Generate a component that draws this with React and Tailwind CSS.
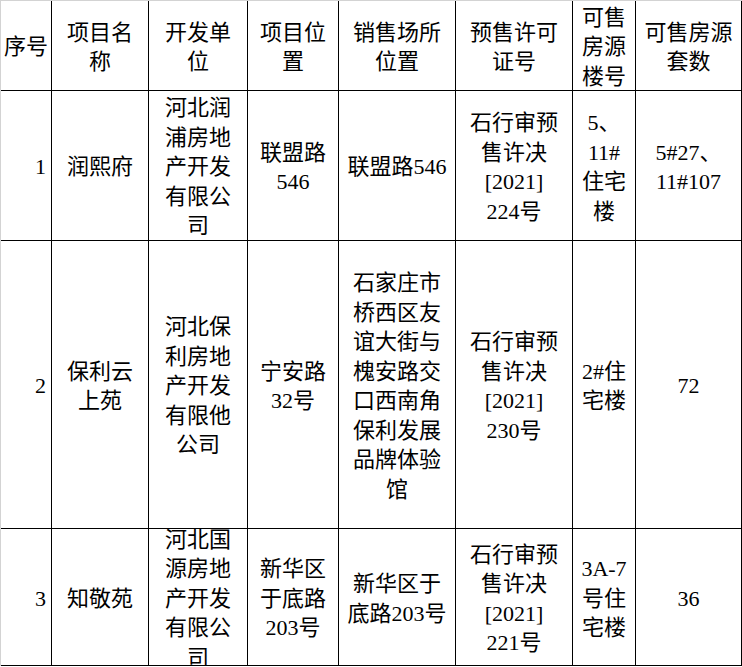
import React from "react";

// Column widths (each includes its 1px right border)
const cols = "grid-cols-[51px_97px_99px_91px_117px_117px_63px_106px]";

const header = [
  ["序号"],
  ["项目名", "称"],
  ["开发单", "位"],
  ["项目位", "置"],
  ["销售场所", "位置"],
  ["预售许可", "证号"],
  ["可售", "房源", "楼号"],
  ["可售房源", "套数"],
];

const rows = [
  {
    h: "h-[150px]",
    cells: [
      ["1"],
      ["润熙府"],
      ["河北润", "浦房地", "产开发", "有限公", "司"],
      ["联盟路", "546"],
      ["联盟路546"],
      ["石行审预", "售许决", "[2021]", "224号"],
      ["5、", "11#", "住宅", "楼"],
      ["5#27、", "11#107"],
    ],
  },
  {
    h: "h-[288px]",
    cells: [
      ["2"],
      ["保利云", "上苑"],
      ["河北保", "利房地", "产开发", "有限他", "公司"],
      ["宁安路", "32号"],
      ["石家庄市", "桥西区友", "谊大街与", "槐安路交", "口西南角", "保利发展", "品牌体验", "馆"],
      ["石行审预", "售许决", "[2021]", "230号"],
      ["2#住", "宅楼"],
      ["72"],
    ],
  },
  {
    h: "h-[137px]",
    cells: [
      ["3"],
      ["知敬苑"],
      ["河北国", "源房地", "产开发", "有限公", "司"],
      ["新华区", "于底路", "203号"],
      ["新华区于", "底路203号"],
      ["石行审预", "售许决", "[2021]", "221号"],
      ["3A-7", "号住", "宅楼"],
      ["36"],
    ],
  },
];

const Cell = ({ lines, right }) => (
  <div
    className={`flex flex-col justify-center overflow-hidden border-r border-b border-black pt-[3px] ${
      right ? "items-end pr-[5px]" : "items-center"
    }`}
  >
    {lines.map((l, i) => (
      <div key={i} className="whitespace-nowrap leading-[29.5px] shrink-0">
        {l}
      </div>
    ))}
  </div>
);

export default function App() {
  return (
    <div
      className="w-[742px] h-[667px] bg-white text-black text-[22px]"
      style={{ fontFamily: '"Liberation Serif", "Noto Sans CJK SC", serif' }}
    >
      <div className="border-l border-t border-[#d3d3d3]">
        {/* header */}
        <div className={`grid ${cols} h-[90px]`}>
          {header.map((c, i) => (
            <Cell key={i} lines={c} />
          ))}
        </div>
        {/* body rows */}
        {rows.map((r, ri) => (
          <div key={ri} className={`grid ${cols} ${r.h}`}>
            {r.cells.map((c, i) => (
              <Cell key={i} lines={c} right={i === 0} />
            ))}
          </div>
        ))}
      </div>
    </div>
  );
}
